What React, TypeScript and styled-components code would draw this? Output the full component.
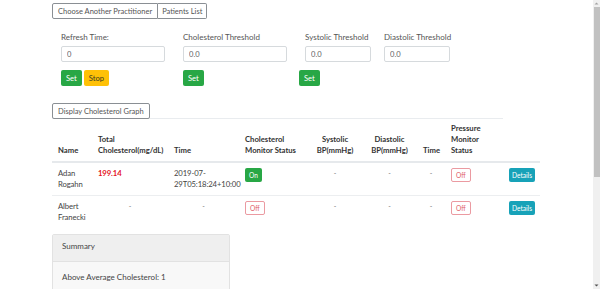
import React from 'react';
import styled, { createGlobalStyle, css } from 'styled-components';

const GlobalStyle = createGlobalStyle`
  body {
    margin: 0;
    background: #ffffff;
    font-family: Lato, 'Open Sans', sans-serif;
    color: #333;
  }
`;

const Page = styled.div`
  display: flex;
  flex-direction: column;
  align-items: flex-start;
  padding: 3px 0 0 52px;
  min-height: 480px;
  box-sizing: border-box;
`;

const Scrollbar = styled.div`
  position: fixed;
  top: 0;
  right: 0;
  width: 7px;
  height: 100vh;
  background: #f0f0f0;
  display: flex;
  flex-direction: column;
  align-items: center;
`;

const ScrollArrow = styled.svg`
  width: 7px;
  height: 7px;
  flex: none;
`;

const ScrollThumb = styled.div`
  width: 6px;
  height: 170px;
  background: #c1c1c1;
`;

const ScrollRest = styled.div`
  flex: 1;
`;

const ButtonGroup = styled.div`
  display: flex;
`;

const OutlineButton = styled.button<{ $joined?: 'left' | 'right' }>`
  height: 16px;
  padding: 0 5px;
  font-family: inherit;
  font-size: 7.5px;
  color: #555;
  background: #fff;
  border: 1px solid #8a8f94;
  border-radius: 2px;
  cursor: pointer;
  ${p => p.$joined === 'left' && css`border-top-right-radius: 0; border-bottom-right-radius: 0;`}
  ${p => p.$joined === 'right' && css`border-top-left-radius: 0; border-bottom-left-radius: 0; border-left: none; padding: 0 4px;`}
`;

const ControlsRow = styled.div`
  display: flex;
  padding: 13px 0 0 9px;
`;

const Field = styled.div<{ $width: number; $gap: number }>`
  display: flex;
  flex-direction: column;
  width: ${p => p.$width}px;
  margin-right: ${p => p.$gap}px;
`;

const Label = styled.label`
  font-size: 8px;
  line-height: 10px;
  height: 10px;
  color: #555;
  white-space: nowrap;
`;

const Input = styled.input`
  margin-top: 4px;
  height: 16px;
  box-sizing: border-box;
  border: 1px solid #d6dadd;
  border-radius: 2px;
  padding: 0 5px;
  font-family: inherit;
  font-size: 7.6px;
  color: #666;
  outline: none;
`;

const ActionRow = styled.div<{ $shift?: number }>`
  display: flex;
  gap: 2px;
  margin-top: 8px;
  margin-left: ${p => p.$shift ?? 0}px;
  height: 16px;
`;

const SolidButton = styled.button<{ $variant: 'success' | 'warning' }>`
  height: 16px;
  padding: 0 5px;
  font-family: inherit;
  font-size: 7.6px;
  border: none;
  border-radius: 2px;
  cursor: pointer;
  background: ${p => (p.$variant === 'success' ? '#28a745' : '#ffc107')};
  color: ${p => (p.$variant === 'success' ? '#fff' : '#3a3a20')};
`;

const GraphButton = styled(OutlineButton)`
  margin-top: 17px;
  position: relative;
  z-index: 1;
`;

const Table = styled.table`
  width: 488px;
  table-layout: fixed;
  border-collapse: collapse;
  margin-top: -1px;
  font-size: 7.7px;
  line-height: 11px;
  color: #444;
`;

const HeadCell = styled.th<{ $center?: boolean; $noTop?: boolean }>`
  padding: 4px 6px 5px;
  vertical-align: bottom;
  text-align: ${p => (p.$center ? 'center' : 'left')};
  font-weight: 700;
  color: #333;
  border-top: ${p => (p.$noTop ? 'none' : '1px solid #e9ecef')};
  border-bottom: 2px solid #e6e9ec;
`;

const Cell = styled.td<{ $center?: boolean }>`
  padding: 5px 6px;
  vertical-align: top;
  text-align: ${p => (p.$center ? 'center' : 'left')};
  border-top: 1px solid #eceef0;
  letter-spacing: -0.1px;
`;

const Dash = styled.span`
  font-size: 7px;
  color: #777;
`;

const HighValue = styled.span`
  color: #e4141e;
  font-weight: 700;
`;

const Badge = styled.button<{ $on?: boolean }>`
  height: 14px;
  padding: 0 4px;
  font-family: inherit;
  font-size: 6.6px;
  border-radius: 2px;
  cursor: pointer;
  ${p =>
    p.$on
      ? css`background: #28a745; color: #fff; border: none;`
      : css`background: #fff; color: #e0606a; border: 1px solid #eb9aa1;`}
`;

const DetailsButton = styled.button`
  height: 14px;
  width: 26px;
  padding: 0;
  font-family: inherit;
  font-size: 6.6px;
  color: #fff;
  background: #17a2b8;
  border: none;
  border-radius: 2px;
  cursor: pointer;
`;

const Card = styled.div`
  margin-top: 6px;
  width: 176px;
  border: 1px solid #e2e2e2;
  border-radius: 2px;
  background: #f8f8f8;
  font-size: 8px;
  color: #444;
`;

const CardHeader = styled.div`
  height: 27px;
  padding: 6px 9px 0;
  box-sizing: border-box;
  background: #efefef;
  border-bottom: 1px solid #e2e2e2;
  line-height: 10px;
`;

const CardBody = styled.div`
  padding: 10px 9px;
  line-height: 10px;
`;

const patients = [
  { name: ['Adan', 'Rogahn'], chol: '199.14', time: ['2019-07-', '29T05:18:24+10:00'], on: true },
  { name: ['Albert', 'Franecki'], chol: null, time: null, on: false },
];

const App: React.FC = () => {
  return (
    <>
      <GlobalStyle />
      <Page>
        <ButtonGroup>
          <OutlineButton $joined="left">Choose Another Practitioner</OutlineButton>
          <OutlineButton $joined="right">Patients List</OutlineButton>
        </ButtonGroup>

        <ControlsRow>
          <Field $width={104} $gap={18}>
            <Label>Refresh Time:</Label>
            <Input defaultValue="0" />
            <ActionRow>
              <SolidButton $variant="success">Set</SolidButton>
              <SolidButton $variant="warning">Stop</SolidButton>
            </ActionRow>
          </Field>
          <Field $width={104} $gap={18}>
            <Label>Cholesterol Threshold</Label>
            <Input defaultValue="0.0" />
            <ActionRow>
              <SolidButton $variant="success">Set</SolidButton>
            </ActionRow>
          </Field>
          <Field $width={66} $gap={13}>
            <Label>Systolic Threshold</Label>
            <Input defaultValue="0.0" />
            <ActionRow $shift={-6}>
              <SolidButton $variant="success">Set</SolidButton>
            </ActionRow>
          </Field>
          <Field $width={66} $gap={0}>
            <Label>Diastolic Threshold</Label>
            <Input defaultValue="0.0" />
          </Field>
        </ControlsRow>

        <GraphButton>Display Cholesterol Graph</GraphButton>

        <Table>
          <colgroup>
            <col style={{ width: 40 }} />
            <col style={{ width: 76 }} />
            <col style={{ width: 71 }} />
            <col style={{ width: 69 }} />
            <col style={{ width: 54 }} />
            <col style={{ width: 55 }} />
            <col style={{ width: 28 }} />
            <col style={{ width: 58 }} />
            <col style={{ width: 37 }} />
          </colgroup>
          <thead>
            <tr>
              <HeadCell>Name</HeadCell>
              <HeadCell>Total Cholesterol(mg/dL)</HeadCell>
              <HeadCell>Time</HeadCell>
              <HeadCell>Cholesterol Monitor Status</HeadCell>
              <HeadCell $center>Systolic BP(mmHg)</HeadCell>
              <HeadCell $center>Diastolic BP(mmHg)</HeadCell>
              <HeadCell $center>Time</HeadCell>
              <HeadCell>Pressure Monitor Status</HeadCell>
              <HeadCell $noTop />
            </tr>
          </thead>
          <tbody>
            {patients.map(p => (
              <tr key={p.name.join(' ')}>
                <Cell>
                  {p.name[0]}
                  <br />
                  {p.name[1]}
                </Cell>
                {p.chol ? (
                  <Cell>
                    <HighValue>{p.chol}</HighValue>
                  </Cell>
                ) : (
                  <Cell $center>
                    <Dash>-</Dash>
                  </Cell>
                )}
                {p.time ? (
                  <Cell>
                    {p.time[0]}
                    <br />
                    {p.time[1]}
                  </Cell>
                ) : (
                  <Cell $center>
                    <Dash>-</Dash>
                  </Cell>
                )}
                <Cell>
                  <Badge $on={p.on}>{p.on ? 'On' : 'Off'}</Badge>
                </Cell>
                <Cell $center>
                  <Dash>-</Dash>
                </Cell>
                <Cell $center>
                  <Dash>-</Dash>
                </Cell>
                <Cell $center>
                  <Dash>-</Dash>
                </Cell>
                <Cell>
                  <Badge>Off</Badge>
                </Cell>
                <Cell>
                  <DetailsButton>Details</DetailsButton>
                </Cell>
              </tr>
            ))}
          </tbody>
        </Table>

        <Card>
          <CardHeader>Summary</CardHeader>
          <CardBody>Above Average Cholesterol: 1</CardBody>
        </Card>
      </Page>

      <Scrollbar>
        <ScrollArrow viewBox="0 0 7 7">
          <path d="M1.5 4.5L3.5 2.5L5.5 4.5Z" fill="#a3a3a3" />
        </ScrollArrow>
        <ScrollThumb />
        <ScrollRest />
        <ScrollArrow viewBox="0 0 7 7">
          <path d="M1.5 2.5L3.5 4.5L5.5 2.5Z" fill="#505050" />
        </ScrollArrow>
      </Scrollbar>
    </>
  );
};

export default App;
